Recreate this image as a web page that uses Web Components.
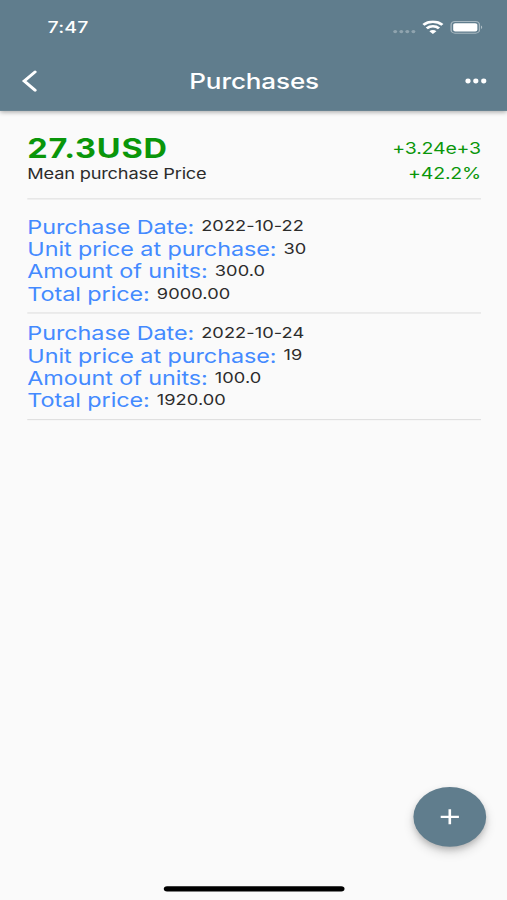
<!DOCTYPE html>
<html lang="en">
<head>
<meta charset="utf-8">
<title>Purchases</title>
<style>
    html, body {
        margin: 0;
        width: 507px;
        height: 900px;
        overflow: hidden;
        background: #fafafa;
    }
</style>
</head>
<body>
<purchases-screen>
    <status-bar slot="top" time="7:47"></status-bar>
    <app-bar slot="top">Purchases</app-bar>
    <price-summary price="27.3USD" gain="+3.24e+3" percent="+42.2%">Mean purchase Price</price-summary>
    <purchase-item date="2022-10-22" unit="30" amount="300.0" total="9000.00"></purchase-item>
    <purchase-item date="2022-10-24" unit="19" amount="100.0" total="1920.00"></purchase-item>
    <add-button slot="action"></add-button>
</purchases-screen>

<script>
// The whole phone screen, laid out at 390x844 and stretched to the window.
class PurchasesScreen extends HTMLElement {
    constructor() {
        super();
        this.attachShadow({ mode: 'open' });
    }

    connectedCallback() {
        this.shadowRoot.innerHTML = `
            <style>
                :host {
                    display: flex;
                    flex-direction: column;
                    position: relative;
                    width: 390px;
                    height: 844px;
                    transform: scale(1.3, 1.06635);
                    transform-origin: 0 0;
                    background: #fafafa;
                    font-family: Inter, "Liberation Sans", sans-serif;
                    color: #2c2c2c;
                }
                header {
                    height: 103.5px;
                    flex-shrink: 0;
                    background: #607d8d;
                    color: #fff;
                    box-shadow: 0 2px 4px rgba(0, 0, 0, 0.35);
                }
                main {
                    flex: 1;
                    padding: 19.5px 20px 0 21px;
                }
                .action {
                    position: absolute;
                    right: 16px;
                    bottom: 50px;
                }
                .home {
                    width: 139px;
                    height: 5px;
                    margin: 0 auto 8px;
                    border-radius: 3px;
                    background: #000;
                }
            </style>
            <header><slot name="top"></slot></header>
            <main><slot></slot></main>
            <div class="action"><slot name="action"></slot></div>
            <div class="home"></div>
        `;
    }
}

class StatusBar extends HTMLElement {
    constructor() {
        super();
        this.attachShadow({ mode: 'open' });
    }

    connectedCallback() {
        this.shadowRoot.innerHTML = `
            <style>
                :host {
                    display: flex;
                    align-items: center;
                    justify-content: space-between;
                    box-sizing: border-box;
                    height: 47px;
                    padding: 4px 19px 0 36.6px;
                    font-size: 15px;
                    font-weight: 550;
                    line-height: 18px;
                    letter-spacing: 0.15px;
                }
                span { padding-top: 1px; }
                svg { display: block; }
            </style>
            <span>${this.getAttribute('time')}</span>
            <svg width="70" height="14" viewBox="0 0 70 14" fill="#fff">
                <g opacity="0.3">
                    <circle cx="3" cy="10.6" r="1.5"/>
                    <circle cx="7.7" cy="10.6" r="1.5"/>
                    <circle cx="12.3" cy="10.6" r="1.5"/>
                    <circle cx="17" cy="10.6" r="1.5"/>
                </g>
                <g fill="none" stroke="#fff" stroke-width="2.3">
                    <path d="M24.7 4.4a10.6 10.6 0 0 1 14.6 0"/>
                    <path d="M27.3 7.5a6.7 6.7 0 0 1 9.4 0"/>
                </g>
                <path d="M32 13l2.7-2.8a3.8 3.8 0 0 0-5.4 0z"/>
                <rect x="46" y="1.1" width="21.8" height="11" rx="3" fill="none" stroke="#fff" stroke-opacity="0.45"/>
                <rect x="47.6" y="2.7" width="18.6" height="7.8" rx="1.6"/>
                <path d="M69 4.9a1.8 1.8 0 0 1 0 3.2z" opacity="0.5"/>
            </svg>
        `;
    }
}

class AppBar extends HTMLElement {
    constructor() {
        super();
        this.attachShadow({ mode: 'open' });
    }

    connectedCallback() {
        this.shadowRoot.innerHTML = `
            <style>
                :host {
                    display: flex;
                    align-items: center;
                    justify-content: space-between;
                    box-sizing: border-box;
                    height: 56px;
                    padding: 1.6px 15px 0 16px;
                }
                .title {
                    font-size: 20px;
                    font-weight: 500;
                    letter-spacing: -0.07px;
                }
                svg { display: block; }
            </style>
            <svg width="18" height="22" viewBox="0 0 18 22" fill="none" stroke="#fff" stroke-width="2.5" stroke-linecap="round">
                <path d="M11 2.4L2.6 11L11 19.6"/>
            </svg>
            <span class="title"><slot></slot></span>
            <svg width="18" height="22" viewBox="0 0 18 22" fill="#fff">
                <ellipse cx="3" cy="10.9" rx="2" ry="2.3"/>
                <ellipse cx="9" cy="10.9" rx="2" ry="2.3"/>
                <ellipse cx="15.1" cy="10.9" rx="2" ry="2.3"/>
            </svg>
        `;
    }
}

class PriceSummary extends HTMLElement {
    constructor() {
        super();
        this.attachShadow({ mode: 'open' });
    }

    connectedCallback() {
        this.shadowRoot.innerHTML = `
            <style>
                :host {
                    display: flex;
                    justify-content: space-between;
                    box-sizing: border-box;
                    height: 64px;
                    margin-bottom: 15px;
                    border-bottom: 1px solid #dedede;
                    font-size: 14px;
                }
                .price {
                    font-size: 25px;
                    font-weight: 700;
                    line-height: 32px;
                    letter-spacing: 0.6px;
                    color: #0a960a;
                }
                .label {
                    line-height: 16px;
                    letter-spacing: -0.14px;
                }
                .change {
                    font-size: 15px;
                    letter-spacing: -0.14px;
                    text-align: right;
                    line-height: 24px;
                    color: #0a960a;
                    padding-top: 3.5px;
                }
            </style>
            <div>
                <div class="price">${this.getAttribute('price')}</div>
                <div class="label"><slot></slot></div>
            </div>
            <div class="change">
                <div>${this.getAttribute('gain')}</div>
                <div>${this.getAttribute('percent')}</div>
            </div>
        `;
    }
}

class PurchaseItem extends HTMLElement {
    constructor() {
        super();
        this.attachShadow({ mode: 'open' });
    }

    connectedCallback() {
        const rows = [
            ['Purchase Date:', 'date'],
            ['Unit price at purchase:', 'unit'],
            ['Amount of units:', 'amount'],
            ['Total price:', 'total'],
        ];
        this.shadowRoot.innerHTML = `
            <style>
                :host {
                    display: block;
                    padding-bottom: 7px;
                    margin-bottom: 8px;
                    border-bottom: 1px solid #dedede;
                }
                .row {
                    display: flex;
                    align-items: center;
                    gap: 5.4px;
                    height: 21px;
                }
                .label {
                    font-size: 18px;
                    letter-spacing: -0.06px;
                    color: #448aff;
                }
                .value {
                    font-size: 14px;
                    letter-spacing: 0.06px;
                    padding-bottom: 2px;
                }
            </style>
            ${rows.map(([label, name]) => `
                <div class="row">
                    <span class="label">${label}</span>
                    <span class="value">${this.getAttribute(name)}</span>
                </div>
            `).join('')}
        `;
    }
}

class AddButton extends HTMLElement {
    constructor() {
        super();
        this.attachShadow({ mode: 'open' });
    }

    connectedCallback() {
        this.shadowRoot.innerHTML = `
            <style>
                :host {
                    display: flex;
                    align-items: center;
                    justify-content: center;
                    width: 56px;
                    height: 56px;
                    border-radius: 50%;
                    background: #607d8d;
                    box-shadow: 0 3px 5px -1px rgba(0, 0, 0, 0.2), 0 5px 9px rgba(0, 0, 0, 0.16);
                }
            </style>
            <svg width="24" height="24" viewBox="0 0 24 24" fill="#fff">
                <path d="M19 13h-6v6h-2v-6H5v-2h6V5h2v6h6z"/>
            </svg>
        `;
    }
}

customElements.define('purchases-screen', PurchasesScreen);
customElements.define('status-bar', StatusBar);
customElements.define('app-bar', AppBar);
customElements.define('price-summary', PriceSummary);
customElements.define('purchase-item', PurchaseItem);
customElements.define('add-button', AddButton);
</script>
</body>
</html>
